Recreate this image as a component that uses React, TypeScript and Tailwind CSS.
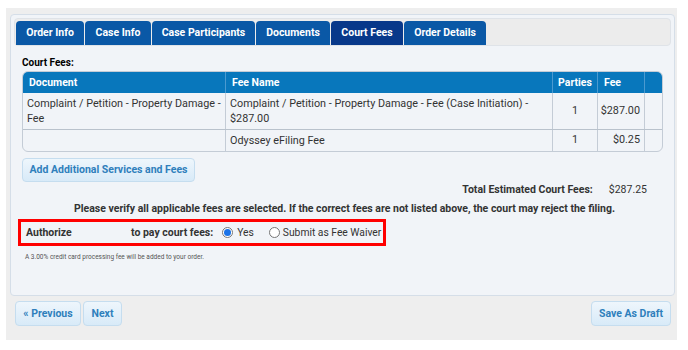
import React from "react";

const TABS = ["Order Info", "Case Info", "Case Participants", "Documents", "Court Fees", "Order Details"];
const TAB_W = ["w-[68px]", "w-[66px]", "w-[103px]", "w-[74px]", "w-[72px]", "w-[82px]"];

const ROWS = [
  {
    doc: "Complaint / Petition - Property Damage - Fee",
    fee: "Complaint / Petition - Property Damage - Fee (Case Initiation) - $287.00",
    parties: "1",
    amount: "$287.00",
  },
  { doc: "", fee: "Odyssey eFiling Fee", parties: "1", amount: "$0.25" },
];

const btn =
  "rounded-[4px] border border-[#c5ddef] bg-gradient-to-b from-[#eef6fc] to-[#d8eaf8] text-[10.5px] font-bold text-[#2f7fbc] whitespace-nowrap";

function Radio({ checked }: { checked?: boolean }) {
  return (
    <span className="inline-flex h-[11px] w-[11px] shrink-0 items-center justify-center rounded-full border border-[#767676] bg-white">
      {checked && <span className="h-[7px] w-[7px] rounded-full bg-[#1a73e8]" />}
    </span>
  );
}

export default function App() {
  return (
    <div className="h-[350px] w-[688px] bg-white pt-[8px] pl-[6px] font-['Roboto',sans-serif] text-[#333]">
      <div className="h-[332px] w-[671px] bg-[#eeeeee] pt-[6px] pl-[4px]">
        {/* Panel */}
        <div className="h-[282px] w-[665px] rounded-[4px] border border-[#d5dee8] bg-[#f1f4f8] p-[3px]">
          {/* Tab bar */}
          <div className="flex h-[28px] items-end rounded-[4px] border border-[#dfe3e8] bg-[#ececec] pl-[1px]">
            {TABS.map((t, i) => (
              <div
                key={t}
                className={`${TAB_W[i]} mr-[1px] flex h-[24px] items-center justify-center rounded-t-[4px] text-[10.5px] font-bold text-white ${
                  t === "Court Fees" ? "bg-[#08388a]" : "bg-[#0a58a6]"
                }`}
              >
                {t}
              </div>
            ))}
          </div>

          <div className="pl-[8px]">
            <div className="mt-[11px] text-[10px] font-bold leading-[12px] text-black">Court Fees:</div>

            {/* Table */}
            <div className="mt-[2px] w-[641px] overflow-hidden rounded-[6px] border border-[#c4ccd6] text-[10.8px] text-[#333]">
              <div className="flex h-[21px] bg-[#0877bc] text-[10.5px] font-bold text-white">
                <div className="flex w-[202px] items-center px-[6px]">Document</div>
                <div className="flex w-[327px] items-center border-l border-[#4b9ad0] px-[6px]">Fee Name</div>
                <div className="flex w-[45px] items-center justify-center border-l border-[#4b9ad0]">Parties</div>
                <div className="flex w-[47px] items-center border-l border-[#4b9ad0] px-[6px]">Fee</div>
                <div className="flex-1 border-l border-[#4b9ad0]" />
              </div>
              {ROWS.map((r, i) => (
                <div
                  key={i}
                  className={`flex ${i === 0 ? "h-[36px]" : "h-[22px] border-t border-[#b9c2cc]"}`}
                >
                  <div className="flex w-[202px] items-center px-[4px] leading-[15px]">{r.doc}</div>
                  <div className="flex w-[327px] items-center border-l border-[#c4ccd6] px-[4px] leading-[15px]">
                    {r.fee}
                  </div>
                  <div className="flex w-[45px] items-center justify-center border-l border-[#c4ccd6]">
                    {r.parties}
                  </div>
                  <div className="flex w-[47px] items-center justify-end border-l border-[#c4ccd6] px-[4px]">
                    {r.amount}
                  </div>
                  <div className="flex-1 border-l border-[#c4ccd6]" />
                </div>
              ))}
            </div>

            <button className={`${btn} mt-[6px] h-[24px] w-[173px]`}>Add Additional Services and Fees</button>

            <div className="mt-[1px] flex w-[625px] justify-end text-[10.5px] font-bold leading-[14px] text-[#333]">
              <span>Total Estimated Court Fees:</span>
              <span className="ml-[16px] font-normal">$287.25</span>
            </div>

            <div className="mt-[5px] pl-[52px] text-[10.5px] font-bold leading-[14px] whitespace-nowrap text-[#333]">
              Please verify all applicable fees are selected. If the correct fees are not listed above, the court may
              reject the filing.
            </div>
          </div>

          {/* Authorize box */}
          <div className="mt-[3px] ml-[4px] flex h-[27px] w-[368px] items-center border-[3px] border-[#ff0000] pl-[5px] text-[10.3px] whitespace-nowrap">
            <span className="w-[105px] shrink-0 text-[10.5px] font-bold text-[#333]">Authorize</span>
            <span className="text-[10.5px] font-bold text-[#333]">to pay court fees:</span>
            <span className="ml-[9px] flex items-center gap-[4px]">
              <Radio checked />
              Yes
            </span>
            <span className="ml-[15px] flex items-center gap-[3px]">
              <Radio />
              Submit as Fee Waiver
            </span>
          </div>

          <div className="mt-[7px] pl-[11px] text-[6.5px] leading-[8px] text-[#555]">
            A 3.00% credit card processing fee will be added to your order.
          </div>
        </div>

        {/* Footer buttons */}
        <div className="mt-[5px] flex pr-[6px] pl-[5px]">
          <button className={`${btn} h-[25px] w-[66px]`}>« Previous</button>
          <button className={`${btn} ml-[2px] h-[25px] w-[39px]`}>Next</button>
          <button className={`${btn} ml-auto h-[25px] w-[80px]`}>Save As Draft</button>
        </div>
      </div>
    </div>
  );
}
